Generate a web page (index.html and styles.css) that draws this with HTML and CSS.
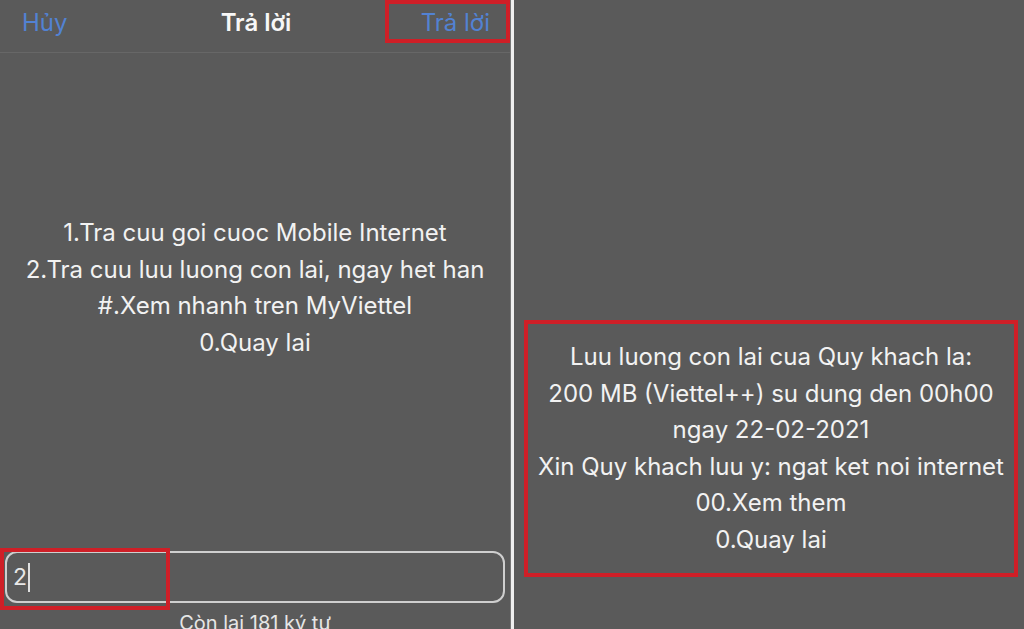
FILE: index.html
```html
<!DOCTYPE html>
<html lang="vi">
<head>
<meta charset="utf-8">
<title>Trả lời</title>
<link rel="stylesheet" href="styles.css">
</head>
<body>
<div class="screen">
  <section class="pane pane-left">
    <header class="navbar">
      <span class="nav-btn nav-cancel">Hủy</span>
      <span class="nav-title">Trả lời</span>
      <span class="nav-btn nav-send">Trả lời</span>
    </header>
    <div class="message">
      <p>1.Tra cuu goi cuoc Mobile Internet</p>
      <p>2.Tra cuu luu luong con lai, ngay het han</p>
      <p>#.Xem nhanh tren MyViettel</p>
      <p>0.Quay lai</p>
    </div>
    <div class="input-box"><span class="input-text">2</span><span class="caret"></span></div>
    <div class="counter">Còn lại 181 ký tự</div>
    <div class="mark mark-send"></div>
    <div class="mark mark-input"></div>
  </section>
  <div class="divider"></div>
  <section class="pane pane-right">
    <div class="result">
      <p>Luu luong con lai cua Quy khach la:</p>
      <p>200 MB (Viettel++) su dung den 00h00</p>
      <p>ngay 22-02-2021</p>
      <p>Xin Quy khach luu y: ngat ket noi internet</p>
      <p>00.Xem them</p>
      <p>0.Quay lai</p>
    </div>
  </section>
</div>
</body>
</html>
```
FILE: styles.css
```css
* { box-sizing: border-box; }
html, body { margin: 0; padding: 0; }
body {
  background: #5a5a5a;
  font-family: Inter, "Noto Sans", "DejaVu Sans", sans-serif;
  color: #f2f2f2;
}
.screen {
  display: flex;
  width: 1024px;
  height: 629px;
  overflow: hidden;
}
.pane {
  position: relative;
  height: 629px;
  overflow: hidden;
  background: #5a5a5a;
}
.pane-left {
  width: 510px;
  display: flex;
  flex-direction: column;
}
.divider {
  width: 4px;
  background: #efefef;
  border-left: 1px solid #777;
}
.pane-right {
  flex: 1;
  padding: 320px 0 0 10px;
}
.navbar {
  height: 53px;
  border-bottom: 1px solid #676767;
  display: grid;
  grid-template-columns: 1fr auto 1fr;
  align-items: center;
  padding: 0 20px 7px 22px;
  font-size: 24px;
}
.nav-btn { color: #5282d3; }
.nav-cancel { justify-self: start; }
.nav-send { justify-self: end; }
.nav-title { font-weight: 600; color: #f7f7f7; }
.message {
  padding-top: 162px;
  text-align: center;
  font-size: 24px;
  line-height: 36.6px;
}
.message p, .result p { margin: 0; }
.input-box {
  margin: auto 5px 0 5px;
  height: 52px;
  border: 2px solid #cfcfcf;
  border-radius: 12px;
  display: flex;
  align-items: center;
  padding-left: 6px;
  font-size: 23px;
  color: #e8e8e8;
}
.caret {
  display: inline-block;
  width: 2px;
  height: 29px;
  background: #e0e0e0;
  margin-left: 1px;
}
.counter {
  margin-top: 8px;
  height: 18px;
  text-align: center;
  font-size: 20px;
  line-height: 24px;
  color: #e6e6e6;
}
.mark {
  position: absolute;
  border: 4px solid #cf1f27;
}
.mark-send { left: 385px; top: 0; width: 125px; height: 43px; }
.mark-input { left: 0; top: 548px; width: 170px; height: 62px; }
.result {
  width: 494px;
  height: 257px;
  border: 4px solid #cf1f27;
  padding-top: 15px;
  text-align: center;
  font-size: 24px;
  line-height: 36.6px;
}
```
